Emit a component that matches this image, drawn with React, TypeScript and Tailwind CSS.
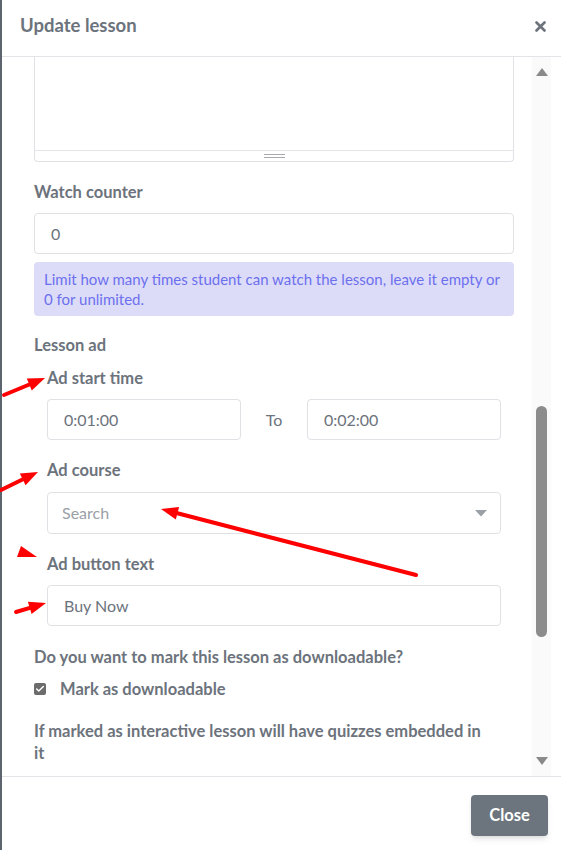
import { Check } from 'lucide-react';

const font = { fontFamily: 'Lato, "Noto Sans", sans-serif' };

type ArrowProps = { x1: number; y1: number; x2: number; y2: number };

const Arrow = ({ x1, y1, x2, y2 }: ArrowProps) => {
  const dx = x2 - x1;
  const dy = y2 - y1;
  const len = Math.hypot(dx, dy);
  const ux = dx / len;
  const uy = dy / len;
  const head = 17;
  const half = 6.5;
  const bx = x2 - ux * head;
  const by = y2 - uy * head;
  const pts = `${x2},${y2} ${bx - uy * half},${by + ux * half} ${bx + uy * half},${by - ux * half}`;
  return (
    <g>
      <line x1={x1} y1={y1} x2={bx + ux * 2} y2={by + uy * 2} stroke="#ff0000" strokeWidth={4} strokeLinecap="round" />
      <polygon points={pts} fill="#ff0000" />
    </g>
  );
};

const Label = ({ children, className = '' }: { children: React.ReactNode; className?: string }) => (
  <div className={`text-[16.5px] leading-[22px] font-bold text-[#6c737c] ${className}`}>{children}</div>
);

const Field = ({ value, className = '' }: { value: string; className?: string }) => (
  <div className={`h-[41px] rounded border border-[#dfe1e5] bg-white flex items-center px-4 text-[16px] text-[#6c737c] ${className}`}>
    {value}
  </div>
);

export default function App() {
  return (
    <div className="relative w-[561px] h-[850px] flex bg-white overflow-hidden" style={font}>
      <div className="w-[2px] bg-[#5c646d] shrink-0" />
      <div className="flex-1 flex flex-col">
        {/* Header */}
        <div className="h-[57px] shrink-0 border-b border-[#e2e4e8] flex items-center justify-between pl-[18px] pr-[15px] pb-[4px]">
          <div className="text-[18.5px] font-bold text-[#6c737c]">Update lesson</div>
          <svg width="11" height="11" viewBox="0 0 11 11">
            <path d="M1.5 1.5 L9.5 9.5 M9.5 1.5 L1.5 9.5" stroke="#6c737c" strokeWidth="2.6" strokeLinecap="round" />
          </svg>
        </div>

        {/* Body */}
        <div className="flex-1 flex overflow-hidden">
          <div className="w-[530px] shrink-0 pl-[32px] pr-[18px]">
            {/* editor tail */}
            <div className="h-[105px] border-x border-b border-[#dfe1e5] rounded-b flex flex-col">
              <div className="flex-1" />
              <div className="h-[11px] border-t border-[#e2e4e8] flex items-center justify-center">
                <div className="w-[21px] flex flex-col gap-[2px]">
                  <div className="h-px bg-[#a7a9ad]" />
                  <div className="h-px bg-[#a7a9ad]" />
                </div>
              </div>
            </div>

            <Label className="mt-[19px] mb-[10px]">Watch counter</Label>
            <Field value="0" />
            <div className="mt-[8px] rounded bg-[#dcdcf9] px-[10px] py-[7px] text-[15px] leading-[20px] text-[#6d70ee]">
              Limit how many times student can watch the lesson, leave it empty or 0 for unlimited.
            </div>

            <Label className="mt-[18px]">Lesson ad</Label>
            <div className="pl-[13px] pr-[13px]">
              <Label className="mt-[11px] mb-[10px]">Ad start time</Label>
              <div className="flex items-center">
                <Field value="0:01:00" className="w-[194px]" />
                <div className="flex-1 text-center text-[16px] text-[#6c737c]">To</div>
                <Field value="0:02:00" className="w-[194px]" />
              </div>

              <Label className="mt-[19px] mb-[11px]">Ad course</Label>
              <div className="h-[42px] rounded border border-[#dfe1e5] bg-white flex items-center justify-between pl-[14px] pr-[13px]">
                <span className="text-[16px] text-[#9aa0a6]">Search</span>
                <svg width="12" height="7" viewBox="0 0 12 7">
                  <path d="M0 0 H12 L6 6.5 Z" fill="#9aa0a6" />
                </svg>
              </div>

              <Label className="mt-[19px] mb-[10px]">Ad button text</Label>
              <Field value="Buy Now" />
            </div>

            <Label className="mt-[20px]">Do you want to mark this lesson as downloadable?</Label>
            <div className="mt-[10px] flex items-center h-[22px]">
              <div className="w-[12px] h-[12px] rounded-[2px] bg-[#6c6c6c] flex items-center justify-center">
                <Check size={10} strokeWidth={3.5} color="white" />
              </div>
              <span className="ml-[14px] text-[16.5px] font-bold text-[#6c737c]">Mark as downloadable</span>
            </div>
            <Label className="mt-[20px] w-[455px]">If marked as interactive lesson will have quizzes embedded in it</Label>
          </div>

          {/* scrollbar drawing */}
          <div className="w-[19px] shrink-0 bg-[#fafafa] flex flex-col items-center py-[11px]">
            <svg width="12" height="8" viewBox="0 0 12 8">
              <path d="M6 0 L12 8 H0 Z" fill="#8a8a8a" />
            </svg>
            <div className="h-[330px]" />
            <div className="w-[11px] h-[231px] rounded-full bg-[#8c8c8c]" />
            <div className="flex-1" />
            <svg width="12" height="8" viewBox="0 0 12 8">
              <path d="M0 0 H12 L6 8 Z" fill="#8a8a8a" />
            </svg>
          </div>
        </div>

        {/* Footer */}
        <div className="h-[74px] shrink-0 border-t border-[#e2e4e8] flex items-start justify-end pt-[18px] pr-[13px]">
          <button className="h-[41px] w-[77px] rounded bg-[#6c757d] text-white text-[16.5px] font-bold shadow-md">Close</button>
        </div>
      </div>

      {/* red annotation arrows */}
      <svg className="absolute inset-0 pointer-events-none" width="561" height="850">
        <Arrow x1={4} y1={395} x2={45} y2={378} />
        <Arrow x1={1} y1={490} x2={38} y2={472} />
        <polygon points="21,546 17,557 37,557" fill="#ff0000" />
        <Arrow x1={16} y1={612} x2={46} y2={603} />
        <Arrow x1={416} y1={575} x2={161} y2={509} />
      </svg>
    </div>
  );
}
